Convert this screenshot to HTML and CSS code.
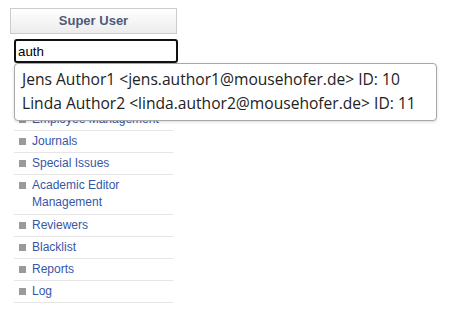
FILE: index.html
```html
<!DOCTYPE html>
<html lang="en">
<head>
  <meta charset="UTF-8">
  <title>Super User</title>
  <link rel="stylesheet" href="styles.css">
</head>
<body>
  <div class="sidebar">
    <div class="panel-title">Super User</div>
    <div class="search">
      <input class="search-input" type="text" value="auth">
      <ul class="suggestions">
        <li>Jens Author1 &lt;jens.author1@mousehofer.de&gt; ID: 10</li>
        <li>Linda Author2 &lt;linda.author2@mousehofer.de&gt; ID: 11</li>
      </ul>
    </div>
    <ul class="menu">
      <li><a href="#">Dashboard</a></li>
      <li><a href="#">Users</a></li>
      <li><a href="#">Employee Management</a></li>
      <li><a href="#">Journals</a></li>
      <li><a href="#">Special Issues</a></li>
      <li class="tall"><a href="#">Academic Editor Management</a></li>
      <li><a href="#">Reviewers</a></li>
      <li><a href="#">Blacklist</a></li>
      <li><a href="#">Reports</a></li>
      <li><a href="#">Log</a></li>
    </ul>
  </div>
</body>
</html>
```

FILE: styles.css
```css
body {
  margin: 0;
  font-family: "Liberation Sans", Arial, sans-serif;
  background-color: white;
}
.sidebar {
  width: 167px;
  padding: 8px 0 0 10px;
}
.panel-title {
  height: 24px;
  line-height: 24px;
  border: 1px solid #cccccc;
  background: linear-gradient(to bottom, #ffffff, #ececec);
  text-align: center;
  font-size: 13px;
  font-weight: bold;
  color: #4e5a78;
}
.search {
  position: relative;
  margin: 5px 0 0 4px;
}
.search-input {
  box-sizing: border-box;
  width: 164px;
  height: 24px;
  padding: 0 2px;
  border: 2px solid #111111;
  border-radius: 3px;
  font-family: "Liberation Sans", Arial, sans-serif;
  font-size: 13.333px;
  color: black;
  outline: none;
}
.suggestions {
  position: absolute;
  top: 24px;
  left: 0;
  z-index: 2;
  margin: 0;
  padding: 3px 0 5px;
  list-style: none;
  background-color: white;
  border: 1px solid #a8a8a8;
  border-radius: 4px;
  box-shadow: 0 1px 3px rgba(0, 0, 0, 0.15);
  white-space: nowrap;
  font-family: "Open Sans", sans-serif;
  font-size: 15.6px;
  color: #222222;
}
.suggestions li {
  height: 24px;
  line-height: 24px;
  padding: 0 20px 0 7px;
}
.menu {
  width: 159px;
  margin: 2px 0 0 4px;
  padding: 0;
  list-style: none;
  font-size: 12px;
  line-height: 17px;
}
.menu li {
  position: relative;
  padding: 2px 0 2px 18px;
  border-bottom: 1px solid #e6e6e6;
}
.menu li.tall {
  padding-bottom: 3px;
}
.menu li::before {
  content: "";
  position: absolute;
  left: 5px;
  top: 7px;
  width: 7px;
  height: 7px;
  background-color: #9a9a9a;
}
.menu a {
  color: #3656a8;
  text-decoration: none;
}
```
